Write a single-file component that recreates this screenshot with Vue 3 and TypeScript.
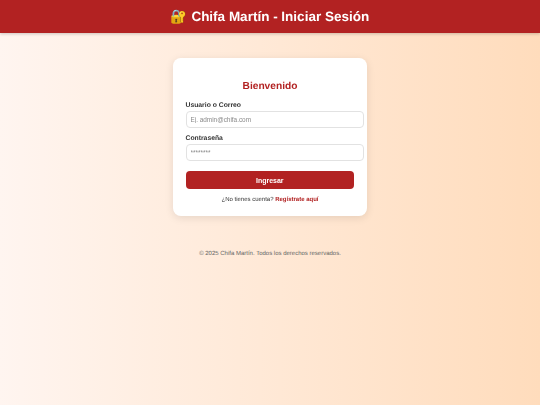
<script setup lang="ts">
const title: string = 'Chifa Martín - Iniciar Sesión'
</script>

<template>
  <div class="page">
    <header class="top">
      <h1 class="title"><span class="emoji">🔐</span> {{ title }}</h1>
    </header>
    <main class="main">
      <form class="card" @submit.prevent>
        <h2 class="welcome">Bienvenido</h2>
        <label class="label" for="user">Usuario o Correo</label>
        <input id="user" class="input" type="text" placeholder="Ej. admin@chifa.com" />
        <label class="label second" for="pass">Contraseña</label>
        <input id="pass" class="input" type="password" placeholder="********" />
        <button class="submit" type="submit">Ingresar</button>
        <p class="register">¿No tienes cuenta? <a class="link" href="#">Regístrate aquí</a></p>
      </form>
    </main>
    <footer class="foot">© 2025 Chifa Martín. Todos los derechos reservados.</footer>
  </div>
</template>

<style>
html, body { margin: 0; padding: 0; }
</style>

<style scoped>
.page {
  width: 540px;
  height: 405px;
  overflow: hidden;
  display: flex;
  flex-direction: column;
  background: linear-gradient(to right, #fff5f0, #ffdcbc);
  font-family: "Liberation Sans", Arial, sans-serif;
}
.top {
  height: 33px;
  flex: none;
  display: flex;
  align-items: center;
  justify-content: center;
  background: #b22222;
  box-shadow: 0 1px 3px rgba(0, 0, 0, 0.2);
  will-change: transform;
  text-rendering: geometricPrecision;
}
.title {
  margin: 1px 0 0;
  font-size: 13.5px;
  font-weight: 700;
  color: #fff;
}
.main {
  display: flex;
  justify-content: center;
  padding-top: 25px;
}
.card {
  width: 194px;
  height: 158px;
  box-sizing: border-box;
  padding: 21.5px 12.5px 0;
  display: flex;
  flex-direction: column;
  align-items: flex-start;
  background: #fff;
  border-radius: 8px;
  box-shadow: 0 2px 8px rgba(0, 0, 0, 0.1);
  will-change: transform;
  text-rendering: geometricPrecision;
}
.welcome {
  margin: 0 0 8px;
  width: 169px;
  text-align: center;
  font-size: 10.2px;
  line-height: 14px;
  font-weight: 700;
  color: #b22222;
}
.label {
  font-size: 6.8px;
  line-height: 8px;
  font-weight: 700;
  color: #333;
  margin-bottom: 1.5px;
}
.second { margin-top: 6.5px; }
.input {
  width: 178.5px;
  height: 17px;
  box-sizing: border-box;
  padding: 0 4px;
  border: 1px solid #e2e2e2;
  border-radius: 4px;
  font-family: inherit;
  font-size: 6.4px;
  outline: none;
}
.input::placeholder { color: #8a8a8a; }
.submit {
  margin-top: 10px;
  width: 168.5px;
  height: 18px;
  padding: 0;
  border: none;
  border-radius: 4px;
  background: #b22222;
  color: #fff;
  font-family: inherit;
  font-size: 7px;
  font-weight: 700;
}
.register {
  margin: 7px 0 0;
  width: 169px;
  text-align: center;
  font-size: 6px;
  line-height: 8px;
  color: #333;
}
.link {
  color: #b22222;
  font-weight: 700;
  text-decoration: none;
}
.foot {
  margin-top: 34px;
  text-align: center;
  font-size: 6px;
  line-height: 8px;
  color: #666;
  text-rendering: geometricPrecision;
}
</style>
